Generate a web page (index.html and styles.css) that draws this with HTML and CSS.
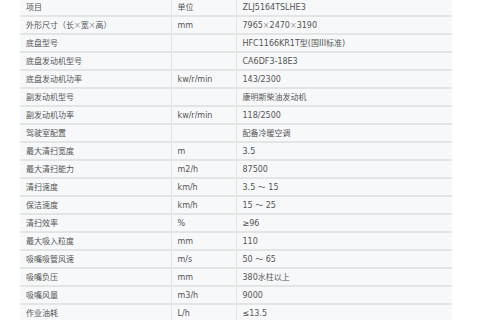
FILE: index.html
```html
<!DOCTYPE html>
<html>
  <head>
    <meta charset="utf-8">
    <title>技术参数</title>
    <link rel="stylesheet" href="styles.css">
  </head>
  <body>
    <table class="spec-table">
      <colgroup>
        <col class="col-name">
        <col class="col-unit">
        <col class="col-value">
      </colgroup>
      <tr><td>项目</td><td>单位</td><td>ZLJ5164TSLHE3</td></tr>
      <tr><td>外形尺寸（长<span class="times">×</span>宽<span class="times">×</span>高）</td><td>mm</td><td>7965<span class="times">×</span>2470<span class="times">×</span>3190</td></tr>
      <tr><td>底盘型号</td><td></td><td>HFC1166KR1T型(国III标准)</td></tr>
      <tr><td>底盘发动机型号</td><td></td><td>CA6DF3-18E3</td></tr>
      <tr><td>底盘发动机功率</td><td>kw/r/min</td><td>143/2300</td></tr>
      <tr><td>副发动机型号</td><td></td><td>康明斯柴油发动机</td></tr>
      <tr><td>副发动机功率</td><td>kw/r/min</td><td>118/2500</td></tr>
      <tr><td>驾驶室配置</td><td></td><td>配备冷暖空调</td></tr>
      <tr><td>最大清扫宽度</td><td>m</td><td>3.5</td></tr>
      <tr><td>最大清扫能力</td><td>m2/h</td><td>87500</td></tr>
      <tr><td>清扫速度</td><td>km/h</td><td>3.5 ～ 15</td></tr>
      <tr><td>保洁速度</td><td>km/h</td><td>15 ～ 25</td></tr>
      <tr><td>清扫效率</td><td>%</td><td>≥96</td></tr>
      <tr><td>最大吸入粒度</td><td>mm</td><td>110</td></tr>
      <tr><td>吸嘴吸管风速</td><td>m/s</td><td>50 ～ 65</td></tr>
      <tr><td>吸嘴负压</td><td>mm</td><td>380水柱以上</td></tr>
      <tr><td>吸嘴风量</td><td>m3/h</td><td>9000</td></tr>
      <tr><td>作业油耗</td><td>L/h</td><td>≤13.5</td></tr>
    </table>
  </body>
</html>
```

FILE: styles.css
```css
body {
  margin: 0;
  background: #fff;
  color: #555;
  font-family: "DejaVu Sans", "Noto Sans CJK SC", sans-serif;
  font-size: 8px;
  overflow: hidden;
}

.spec-table {
  border-collapse: collapse;
  margin: -1px 0 0 20px;
  width: 432px;
  table-layout: fixed;
}

.col-name {
  width: 151px;
}

.col-unit {
  width: 65px;
}

.spec-table td {
  background: #f7f8fa;
  border-bottom: 2px solid #e3e4e4;
  height: 14px;
  line-height: 14px;
  padding: 2px 6px 0;
  white-space: nowrap;
  overflow: hidden;
}

.spec-table td + td {
  border-left: 1px solid #e3e4e4;
}

.times {
  color: #999;
}
```
